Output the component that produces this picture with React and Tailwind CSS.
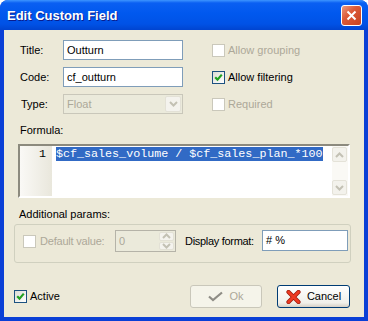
import clsx from 'clsx';

const Check = ({ checked, disabled }) => (
  <span
    className={clsx(
      'w-[13px] h-[13px] border flex items-center justify-center shrink-0',
      disabled
        ? 'border-[#CAC8BB] bg-white'
        : 'border-[#1C5180] bg-gradient-to-br from-[#DCDCD5] to-white'
    )}
  >
    {checked && (
      <svg width="9" height="9" viewBox="0 0 9 9">
        <path d="M1.2 4.2 L3.5 6.6 L7.8 1.6" fill="none" stroke="#21A121" strokeWidth="2.2" />
      </svg>
    )}
  </span>
);

const Chevron = ({ up, color = '#C3C1B4' }) => (
  <svg width="9" height="6" viewBox="0 0 9 6">
    <path d={up ? 'M1 5 L4.5 1.5 L8 5' : 'M1 1 L4.5 4.5 L8 1'} fill="none" stroke={color} strokeWidth="2" />
  </svg>
);

const Field = ({ label, value }) => (
  <div className="flex items-center h-[20px]">
    <span className="w-[43px]">{label}</span>
    <div className="w-[120px] h-[20px] border border-[#7F9DB9] bg-white flex items-center px-[3px]">
      {value}
    </div>
  </div>
);

const Option = ({ label, checked, disabled }) => (
  <div className="flex items-center h-[20px] gap-[3px] whitespace-nowrap">
    <Check checked={checked} disabled={disabled} />
    <span className={disabled ? 'text-[#ACA899]' : 'text-black'}>{label}</span>
  </div>
);

export default function App() {
  return (
    <div className="w-[368px] h-[321px] bg-white font-['Liberation_Sans',Arial,sans-serif] text-[11px] leading-[13px] text-black">
      <div className="h-full flex flex-col rounded-t-[8px] overflow-hidden bg-[#0A3FD6]">
        {/* title bar */}
        <div className="h-[30px] shrink-0 flex items-center justify-between pl-[7px] pr-[6px] bg-[linear-gradient(to_bottom,#3D95FF_0%,#0A5FF2_10%,#0058EE_45%,#0052E6_80%,#0044D0_100%)]">
          <span className="text-white font-bold text-[13px] [text-shadow:1px_1px_#0A1D8C]">Edit Custom Field</span>
          <button className="w-[21px] h-[21px] rounded-[3px] border border-white bg-[linear-gradient(135deg,#EA9A80_0%,#DC5A38_40%,#C5421F_100%)] flex items-center justify-center">
            <svg width="11" height="11" viewBox="0 0 11 11">
              <path d="M1.5 1.5 L9.5 9.5 M9.5 1.5 L1.5 9.5" stroke="white" strokeWidth="2" />
            </svg>
          </button>
        </div>

        {/* client area */}
        <div className="flex-1 mx-[4px] mb-[4px] bg-[#ECE9D8] flex flex-col">
          <div className="flex pt-[10px]">
            <div className="pl-[16px] flex flex-col gap-[7px]">
              <Field label="Title:" value="Outturn" />
              <Field label="Code:" value="cf_outturn" />
              <div className="flex items-center h-[20px]">
                <span className="w-[43px] pl-px">Type:</span>
                <div className="w-[120px] h-[20px] border border-[#C9C7BA] bg-[#EBEADB] flex items-center justify-between pl-[3px] pr-px">
                  <span className="text-[#ACA899]">Float</span>
                  <span className="w-[16px] h-[16px] rounded-[2px] bg-[#F4F3EE] border border-[#E3E1D6] flex items-center justify-center">
                    <Chevron />
                  </span>
                </div>
              </div>
            </div>
            <div className="ml-[29px] flex flex-col gap-[7px]">
              <Option label="Allow grouping" disabled />
              <Option label="Allow filtering" checked />
              <Option label="Required" disabled />
            </div>
          </div>

          <div className="mt-[10px] pl-[16px]">Formula:</div>

          {/* editor */}
          <div className="mt-[7px] ml-[14px] w-[332px] h-[54px] border-2 border-t-[#8C8A7E] border-l-[#8C8A7E] border-b-white border-r-white bg-white flex">
            <div className="w-[33px] shrink-0 bg-[linear-gradient(to_right,#FAF9F6,#E9E7DC)] border-r border-white flex justify-end pr-[6px] pt-px font-['Liberation_Mono',monospace] text-[11.7px] leading-[15px]">
              1
            </div>
            <div className="flex-1 pl-[3px] pt-px font-['Liberation_Mono',monospace] text-[11.7px] leading-[15px] whitespace-nowrap">
              <span className="bg-[#316AC5] text-white">$cf_sales_volume / $cf_sales_plan_*100</span>
            </div>
            <div className="w-[16px] shrink-0 bg-[#FAF9F5] flex flex-col justify-between py-px">
              <span className="w-[15px] h-[15px] rounded-[2px] bg-[#F3F2EC] border border-[#E4E2D8] flex items-center justify-center">
                <Chevron up />
              </span>
              <span className="w-[15px] h-[15px] rounded-[2px] bg-[#F3F2EC] border border-[#E4E2D8] flex items-center justify-center">
                <Chevron />
              </span>
            </div>
          </div>

          <div className="mt-[10px] pl-[15px]">Additional params:</div>

          {/* group box */}
          <div className="mt-[3px] ml-[10px] w-[337px] h-[39px] border border-[#D0D0BF] rounded-[3px] flex items-start pt-[5px] pl-[8px] whitespace-nowrap">
            <div className="h-[22px] flex items-center gap-[4px] shrink-0">
              <Check disabled />
              <span className="w-[65px] text-[#ACA899] tracking-[-0.2px]">Default value:</span>
            </div>
            <div className="ml-[10px] w-[61px] h-[22px] shrink-0 border border-[#B5B3A8] bg-[#EBEADB] flex items-center justify-between pl-[3px] pr-px">
              <span className="text-[#ACA899]">0</span>
              <span className="w-[15px] h-[18px] flex flex-col gap-px">
                <span className="flex-1 rounded-[2px] bg-[#F4F3EE] border border-[#E3E1D6] flex items-center justify-center">
                  <Chevron up />
                </span>
                <span className="flex-1 rounded-[2px] bg-[#F4F3EE] border border-[#E3E1D6] flex items-center justify-center">
                  <Chevron />
                </span>
              </span>
            </div>
            <span className="ml-[9px] w-[69px] shrink-0 h-[22px] flex items-center tracking-[-0.3px]">Display format:</span>
            <div className="ml-[8px] w-[86px] h-[21px] shrink-0 border border-[#7F9DB9] bg-white flex items-center pl-[3px]">
              # %
            </div>
          </div>

          {/* footer */}
          <div className="mt-[22px] h-[23px] flex items-center pl-[10px] pr-[14px]">
            <div className="flex items-center gap-[3px]">
              <Check checked />
              <span>Active</span>
            </div>
            <button className="ml-auto w-[72px] h-[23px] rounded-[3px] border border-[#C9C7BA] bg-[#F5F4EA] flex items-center justify-center gap-[6px] text-[#ACA899]">
              <svg width="15" height="11" viewBox="0 0 15 11">
                <path d="M1 5.5 L5 9 L14 1.5" fill="none" stroke="#8F8D86" strokeWidth="2.2" />
              </svg>
              <span>Ok</span>
            </button>
            <button className="ml-[15px] w-[73px] h-[23px] rounded-[3px] border border-[#003C74] bg-[linear-gradient(to_bottom,#FFFFFF,#F0F0EA_80%,#D6D0C5)] flex items-center justify-center gap-[6px]">
              <svg width="15" height="14" viewBox="0 0 15 14">
                <path d="M2.5 2 L12.5 12 M12.5 2 L2.5 12" stroke="#9E1B0E" strokeWidth="4.2" strokeLinecap="round" />
                <path d="M2.5 2 L12.5 12 M12.5 2 L2.5 12" stroke="#EE3A22" strokeWidth="2.6" strokeLinecap="round" />
              </svg>
              <span>Cancel</span>
            </button>
          </div>
        </div>
      </div>
    </div>
  );
}
